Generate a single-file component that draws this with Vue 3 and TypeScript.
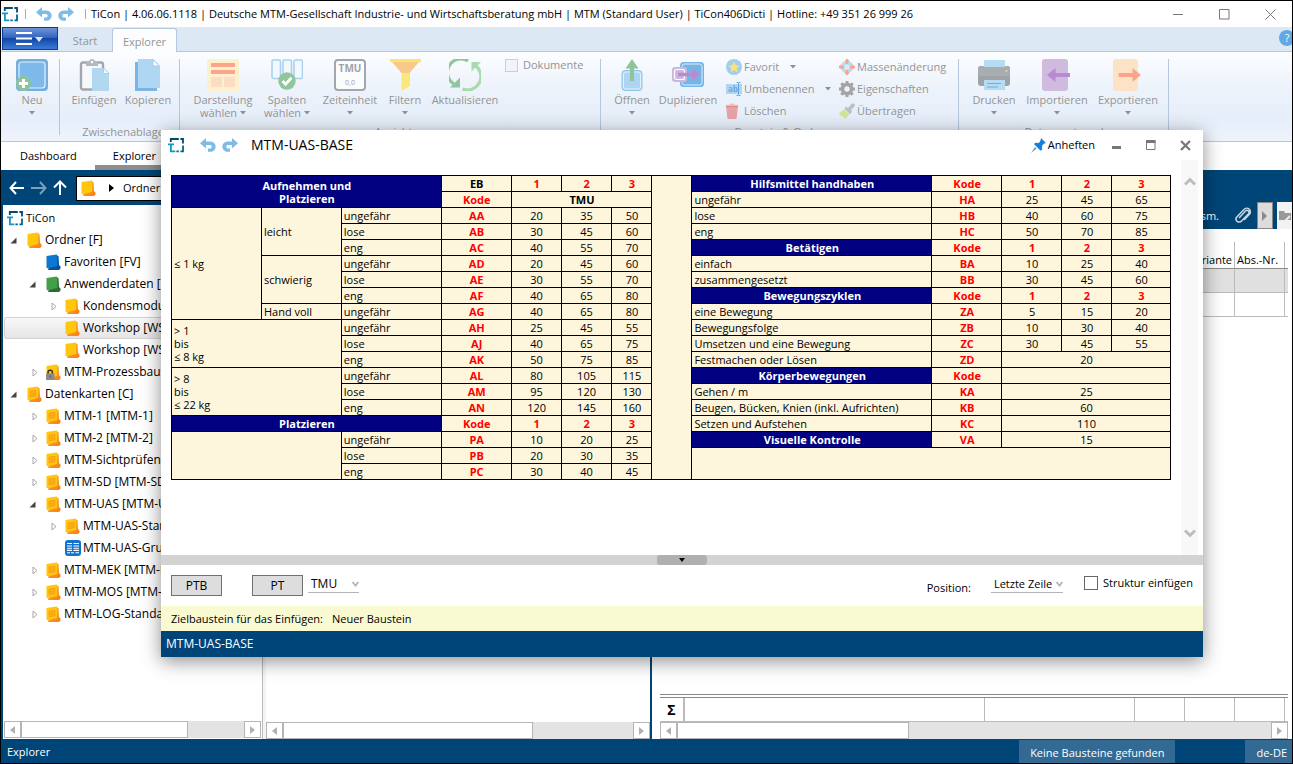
<script setup lang="ts">
import { ref } from 'vue'

interface Cell {
  t?: string
  k: string
  cs?: number
  rs?: number
}

interface TreeNode {
  label: string
  level: number
  icon: string
  state?: 'open' | 'closed'
  selected?: boolean
}

const unit = ref('TMU')
const target = ref('Letzte Zeile')
const insertStructure = ref(false)
const showDocuments = ref(false)

const codeRow = (code: string, values: string[]): Cell[] => [
  { t: code, k: 'code' },
  ...values.map((v): Cell => ({ t: v, k: 'num' })),
]
const headRow = (): Cell[] => ['Kode', '1', '2', '3'].map((t): Cell => ({ t, k: 'code' }))
const leftRow = (name: string, code: string, values: string[]): Cell[] => [
  { t: name, k: 'txt' },
  ...codeRow(code, values),
]

const left: Cell[][] = [
  [
    { t: 'Aufnehmen und\nPlatzieren', k: 'navy', cs: 3, rs: 2 },
    { t: 'EB', k: 'bold' },
    { t: '1', k: 'code' },
    { t: '2', k: 'code' },
    { t: '3', k: 'code' },
  ],
  [{ t: 'Kode', k: 'code' }, { t: 'TMU', k: 'bold', cs: 3 }],
  [{ t: '≤ 1 kg', k: 'txt', rs: 7 }, { t: 'leicht', k: 'txt', rs: 3 }, ...leftRow('ungefähr', 'AA', ['20', '35', '50'])],
  leftRow('lose', 'AB', ['30', '45', '60']),
  leftRow('eng', 'AC', ['40', '55', '70']),
  [{ t: 'schwierig', k: 'txt', rs: 3 }, ...leftRow('ungefähr', 'AD', ['20', '45', '60'])],
  leftRow('lose', 'AE', ['30', '55', '70']),
  leftRow('eng', 'AF', ['40', '65', '80']),
  [{ t: 'Hand voll', k: 'txt' }, ...leftRow('ungefähr', 'AG', ['40', '65', '80'])],
  [{ t: '> 1\nbis\n≤ 8 kg', k: 'txt', cs: 2, rs: 3 }, ...leftRow('ungefähr', 'AH', ['25', '45', '55'])],
  leftRow('lose', 'AJ', ['40', '65', '75']),
  leftRow('eng', 'AK', ['50', '75', '85']),
  [{ t: '> 8\nbis\n≤ 22 kg', k: 'txt', cs: 2, rs: 3 }, ...leftRow('ungefähr', 'AL', ['80', '105', '115'])],
  leftRow('lose', 'AM', ['95', '120', '130']),
  leftRow('eng', 'AN', ['120', '145', '160']),
  [{ t: 'Platzieren', k: 'navy', cs: 3 }, ...headRow()],
  [{ k: 'txt', cs: 2, rs: 3 }, ...leftRow('ungefähr', 'PA', ['10', '20', '25'])],
  leftRow('lose', 'PB', ['20', '30', '35']),
  leftRow('eng', 'PC', ['30', '40', '45']),
]

const wide = (name: string, code: string, value: string, kind = 'txt'): Cell[] => [
  { t: name, k: kind },
  { t: code, k: 'code' },
  { t: value, k: 'num', cs: 3 },
]

const right: Cell[][] = [
  [{ t: 'Hilfsmittel handhaben', k: 'navy' }, ...headRow()],
  leftRow('ungefähr', 'HA', ['25', '45', '65']),
  leftRow('lose', 'HB', ['40', '60', '75']),
  leftRow('eng', 'HC', ['50', '70', '85']),
  [{ t: 'Betätigen', k: 'navy' }, ...headRow()],
  leftRow('einfach', 'BA', ['10', '25', '40']),
  leftRow('zusammengesetzt', 'BB', ['30', '45', '60']),
  [{ t: 'Bewegungszyklen', k: 'navy' }, ...headRow()],
  leftRow('eine Bewegung', 'ZA', ['5', '15', '20']),
  leftRow('Bewegungsfolge', 'ZB', ['10', '30', '40']),
  leftRow('Umsetzen und eine Bewegung', 'ZC', ['30', '45', '55']),
  wide('Festmachen oder Lösen', 'ZD', '20'),
  wide('Körperbewegungen', 'Kode', '', 'navy'),
  wide('Gehen / m', 'KA', '25'),
  wide('Beugen, Bücken, Knien (inkl. Aufrichten)', 'KB', '60'),
  wide('Setzen und Aufstehen', 'KC', '110'),
  wide('Visuelle Kontrolle', 'VA', '15', 'navy'),
  [{ k: 'txt', cs: 5, rs: 2 }],
  [],
]

const rows: Cell[][] = left.map((cells, i) => [
  ...cells,
  ...(i === 0 ? [{ k: 'txt', rs: 19 } as Cell] : []),
  ...right[i],
])

const columns = [90, 80, 100, 70, 50, 50, 41, 40, 240, 70, 60, 50, 59]

const tree: TreeNode[] = [
  { label: 'Ordner [F]', level: 0, icon: 'folder', state: 'open' },
  { label: 'Favoriten [FV]', level: 1, icon: 'folder-blue' },
  { label: 'Anwenderdaten [U]', level: 1, icon: 'folder-green', state: 'open' },
  { label: 'Kondensmodule', level: 2, icon: 'folder', state: 'closed' },
  { label: 'Workshop [WS1]', level: 2, icon: 'folder', selected: true },
  { label: 'Workshop [WS2]', level: 2, icon: 'folder' },
  { label: 'MTM-Prozessbausteine', level: 1, icon: 'folder-lock', state: 'closed' },
  { label: 'Datenkarten [C]', level: 0, icon: 'card', state: 'open' },
  { label: 'MTM-1 [MTM-1]', level: 1, icon: 'card', state: 'closed' },
  { label: 'MTM-2 [MTM-2]', level: 1, icon: 'card', state: 'closed' },
  { label: 'MTM-Sichtprüfen', level: 1, icon: 'card', state: 'closed' },
  { label: 'MTM-SD [MTM-SD]', level: 1, icon: 'card', state: 'closed' },
  { label: 'MTM-UAS [MTM-UAS]', level: 1, icon: 'card', state: 'open' },
  { label: 'MTM-UAS-Standard', level: 2, icon: 'card', state: 'closed' },
  { label: 'MTM-UAS-Grund', level: 2, icon: 'sheet' },
  { label: 'MTM-MEK [MTM-MEK]', level: 1, icon: 'card', state: 'closed' },
  { label: 'MTM-MOS [MTM-MOS]', level: 1, icon: 'card', state: 'closed' },
  { label: 'MTM-LOG-Standard', level: 1, icon: 'card', state: 'closed' },
]
</script>

<template>
  <div class="app">
    <svg class="defs" aria-hidden="true">
      <defs>
        <linearGradient id="gOrange" x1="0" y1="0" x2="1" y2="1">
          <stop offset="0" stop-color="#ffb020" /><stop offset="1" stop-color="#f57c1c" />
        </linearGradient>
      </defs>
      <symbol id="logo" viewBox="0 0 16 16">
        <path d="M2.800 5V2h8M12.400 2H15v4.600" fill="none" stroke="#004a70" stroke-width="1.800" />
        <path d="M15 8.600v5.800h-2.600M10.800 14.400H8.400" fill="none" stroke="#00668f" stroke-width="1.800" />
        <path d="M0 7.400h6M2.900 7.400v7h4.400" fill="none" stroke="#1596c4" stroke-width="1.800" />
      </symbol>
      <symbol id="undo" viewBox="0 0 16 14">
        <path d="M0 5.300 6 0v3.400h4.500a5.200 5.200 0 0 1 0 10.400H8v-3.400h2.300a1.800 1.800 0 0 0 0-3.500H6v3.700z" fill="#7ebbe6" />
      </symbol>
      <symbol id="redo" viewBox="0 0 16 14">
        <path d="M16 5.300 10 0v3.400H5.500a5.200 5.200 0 0 0 0 10.400H8v-3.400H5.700a1.800 1.800 0 0 1 0-3.500H10v3.700z" fill="#7ebbe6" />
      </symbol>
      <symbol id="folder" viewBox="0 0 16 16">
        <path d="M10 1.500l2.500.5.5 9 1.500 1.500v2L13 16H2l1-3z" fill="url(#gOrange)" />
        <path d="M.5 2 10.500.5q.8 0 .8.8V12L2 14.200q-1.500.2-1.500-.8z" fill="#ffc60b" />
      </symbol>
      <symbol id="folder-blue" viewBox="0 0 16 16">
        <path d="M10 1.500l2.500.5.5 9 1.500 1.500v2L13 16H2l1-3z" fill="#00509c" />
        <path d="M.5 2 10.500.5q.8 0 .8.8V12L2 14.200q-1.500.2-1.500-.8z" fill="#0b78d4" />
      </symbol>
      <symbol id="folder-green" viewBox="0 0 16 16">
        <path d="M10 1.500l2.500.5.5 9 1.500 1.500v2L13 16H2l1-3z" fill="#2c6b35" />
        <path d="M.5 2 10.500.5q.8 0 .8.8V12L2 14.200q-1.500.2-1.500-.8z" fill="#44a048" />
      </symbol>
      <symbol id="folder-lock" viewBox="0 0 16 16">
        <path d="M10 1.500l2.500.5.5 9 1.500 1.500v2L13 16H2l1-3z" fill="url(#gOrange)" />
        <path d="M.5 2 10.500.5q.8 0 .8.8V12L2 14.200q-1.500.2-1.500-.8z" fill="#ffc60b" />
        <path d="M2 10V8.500a2.200 2.200 0 0 1 4.400 0V10" fill="none" stroke="#333" stroke-width="1.500" />
        <rect x="0" y="9.500" width="8.500" height="6.500" rx=".8" fill="#8a8a8a" />
        <path d="M4.200 11.500v2" stroke="#555" />
      </symbol>
      <symbol id="card" viewBox="0 0 16 16">
        <path d="M10 1.500l2.500.5.5 9 1.500 1.500v2L13 16H2l1-3z" fill="url(#gOrange)" />
        <path d="M.5 2 10.500.5q.8 0 .8.8V12L2 14.200q-1.500.2-1.500-.8z" fill="#ffc60b" />
        <path d="M3.200 5.200 8.800 4.500v5.200l-5.600 1z" fill="#ffb31a" stroke="#f79c1a" stroke-width="1" />
        <path d="M4.800 7h2.500v1.600H4.800z" fill="none" stroke="#f79c1a" stroke-width=".6" />
      </symbol>
      <symbol id="sheet" viewBox="0 0 16 16">
        <rect width="16" height="16" rx="3" fill="#1373cc" />
        <path d="M2 3.500h5M8.500 3.500H14M2 6h5M8.500 6H14M2 8.200h5M8.500 8.200H14M2 10.400h5M8.500 10.400H14M2 12.800h3M6 12.800h3M10.500 12.800H14" stroke="#fff" stroke-width="1.100" />
      </symbol>
      <symbol id="tri" viewBox="0 0 6 4"><path d="M0 0h6L3 3.500z" fill="#8f8f8f" /></symbol>
      <symbol id="prev" viewBox="0 0 6 8"><path d="M5 0v8L0 4z" fill="#b0b0b0" /></symbol>
      <symbol id="next" viewBox="0 0 6 8"><path d="M0 0v8l5-4z" fill="#b0b0b0" /></symbol>
    </svg>

    <header class="titlebar">
      <svg class="i16"><use href="#logo" /></svg>
      <span class="bar"></span>
      <button class="ghost" aria-label="Rückgängig"><svg class="arrow"><use href="#undo" /></svg></button>
      <button class="ghost" aria-label="Wiederholen"><svg class="arrow"><use href="#redo" /></svg></button>
      <span class="bar late"></span>
      <h1>TiCon | 4.06.06.1118 | Deutsche MTM-Gesellschaft Industrie- und Wirtschaftsberatung mbH | MTM (Standard User) | TiCon406Dicti | Hotline: +49 351 26 999 26</h1>
      <div class="wincontrols">
        <button class="ghost" aria-label="Minimieren"><svg width="11" height="11" viewBox="0 0 11 11"><path d="M0 5.500h10" stroke="#777" /></svg></button>
        <button class="ghost" aria-label="Maximieren"><svg width="11" height="11" viewBox="0 0 11 11"><path d="M.5.500h9.500v9.500H.5z" fill="none" stroke="#777" /></svg></button>
        <button class="ghost" aria-label="Schließen"><svg width="11" height="11" viewBox="0 0 11 11"><path d="m.5.500 10 10M10.500.500l-10 10" stroke="#777" /></svg></button>
      </div>
    </header>

    <nav class="tabs">
      <button class="appmenu" aria-label="Menü">
        <svg width="28" height="13" viewBox="0 0 28 13"><path d="M0 1h16M0 6.500h16M0 12h16" stroke="#fff" stroke-width="2" /><path d="M19 5h8l-4 5z" fill="#dce8fa" /></svg>
      </button>
      <button class="tab">Start</button>
      <button class="tab active">Explorer</button>
      <button class="help" aria-label="Hilfe">?</button>
    </nav>

    <section class="ribbon">
      <div class="group g1">
        <button class="big w56">
          <svg width="32" height="32" viewBox="0 0 32 32"><rect width="32" height="32" rx="4" fill="#74aede" /><rect x="3" y="3" width="26" height="26" rx="3" fill="#7db9ea" stroke="#e4f0fa" stroke-width="1.200" /><circle cx="7.500" cy="24.500" r="7.500" fill="#8fc49a" /><path d="M7.500 20v9M3 24.500h9" stroke="#fff" stroke-width="3" /></svg>
          <span>Neu</span><svg class="tri"><use href="#tri" /></svg>
        </button>
      </div>
      <div class="group g2">
        <div class="items">
          <button class="big w54">
            <svg width="32" height="32" viewBox="0 0 32 32"><rect x="3" y="3.500" width="22" height="27" rx="2" fill="#f5f8fc" stroke="#a3a6aa" stroke-width="2.400" /><path d="M8 7V3h3a3 3 0 0 1 6 0h3v4z" fill="#b4b7bb" /><circle cx="14" cy="3" r="1.300" fill="#fff" /><path d="M14 9h12l5 5v18H14z" fill="#b2d8f1" /><path d="M25.500 9v5.500H31z" fill="#fff" stroke="#a8d0ec" /></svg>
            <span>Einfügen</span>
          </button>
          <button class="big w54">
            <svg width="32" height="32" viewBox="0 0 32 32"><path d="M3 3h22v29H3z" fill="#7ab5e4" /><path d="M6 0h15l7 7v22H6z" fill="#b0d7f2" /><path d="M21 .5V7h6.500z" fill="#fff" stroke="#9fcbea" /></svg>
            <span>Kopieren</span>
          </button>
        </div>
        <div class="caption">Zwischenablage</div>
      </div>
      <div class="group g3">
        <div class="items">
          <button class="big w72">
            <svg width="32" height="32" viewBox="0 0 32 32"><path d="M0 0h32v32H0z" fill="#fcf0cd" /><path d="M4 4h24v4H4zM4 11h24v4H4z" fill="#fba58d" /><path d="M4 18h11v10H4zM17 18h11v10H17z" fill="#fbdcc4" /></svg>
            <span>Darstellung<br>wählen <svg class="tri in"><use href="#tri" /></svg></span>
          </button>
          <button class="big w56">
            <svg width="32" height="32" viewBox="0 0 32 32"><g fill="#f2f8fd" stroke="#a9d2ee" stroke-width="1.600"><rect x="1" y="1" width="8.500" height="18.500" rx="1.500" /><rect x="12" y="1" width="8.500" height="18.500" rx="1.500" /><rect x="23" y="1" width="8.500" height="18.500" rx="1.500" /></g><circle cx="16" cy="22" r="8.700" fill="#90c69b" /><path d="m11.500 22 3 3.200 6-6.500" fill="none" stroke="#fff" stroke-width="2.800" /></svg>
            <span>Spalten<br>wählen <svg class="tri in"><use href="#tri" /></svg></span>
          </button>
          <button class="big w70">
            <svg width="32" height="32" viewBox="0 0 32 32"><rect x="1" y="1" width="30" height="30" rx="3" fill="#fbfcfe" stroke="#a3a6aa" stroke-width="2" /><text x="16" y="13" text-anchor="middle" class="unitbig">TMU</text><text x="16" y="26" text-anchor="middle" class="unitsmall">0,0</text></svg>
            <span>Zeiteinheit</span><svg class="tri"><use href="#tri" /></svg>
          </button>
          <button class="big w40">
            <svg width="32" height="32" viewBox="0 0 32 32"><path d="M1 0h31v3H1z" fill="#fbe36d" /><path d="M3 3h27L20.500 14h-8z" fill="#f9c98a" /><path d="M12.500 14h8.500v13l-8.500 5z" fill="#fbe87c" /></svg>
            <span>Filtern</span><svg class="tri"><use href="#tri" /></svg>
          </button>
          <button class="big w80">
            <svg width="32" height="32" viewBox="0 0 32 32"><path d="M19 1.800A13.500 13.500 0 0 0 5 25" fill="none" stroke="#90c69b" stroke-width="3.200" /><path d="M1 28.500h10V18.500z" fill="#90c69b" /><path d="M13.500 30A13.500 13.500 0 0 0 27 7" fill="none" stroke="#a9d9ae" stroke-width="3.200" /><path d="M32 3H22.500v9.500z" fill="#a9d9ae" /></svg>
            <span>Aktualisieren</span>
          </button>
          <label class="docs"><input v-model="showDocuments" type="checkbox" disabled>Dokumente</label>
        </div>
        <div class="caption">Ansicht</div>
      </div>
      <div class="group g4">
        <div class="items">
          <button class="big w50">
            <svg width="32" height="32" viewBox="0 0 32 32"><rect x="6" y="11.500" width="20" height="20" rx="3" fill="#add5f2" stroke="#8fc5ea" /><rect x="7.500" y="13" width="17" height="17" rx="2" fill="none" stroke="#e3f1fb" /><path d="M16 0 22.500 9.500H18V22h-4V9.500H9.500z" fill="#8fc49a" /></svg>
            <span>Öffnen</span><svg class="tri"><use href="#tri" /></svg>
          </button>
          <button class="big w62">
            <svg width="32" height="32" viewBox="0 0 32 32"><rect x="8" y="3" width="24" height="25" rx="3.500" fill="#76b4e6" /><rect x="10" y="5" width="20" height="21" rx="2.500" fill="none" stroke="#deeefa" /><rect x="0" y="8" width="15" height="15" rx="3" fill="#cdb8dc" /><rect x="2.500" y="10.500" width="10" height="10" rx="2" fill="none" stroke="#fff" stroke-width="1.200" /><path d="M6 13.700h14V9.500l8 6-8 6v-4.300H6z" fill="#b78ad2" /></svg>
            <span>Duplizieren</span>
          </button>
          <div class="small list1">
            <button>
              <svg class="i16" viewBox="0 0 16 16"><circle cx="8" cy="8" r="8" fill="#a3cdee" /><path d="m8 2.600 1.700 3.600 3.900.4-2.900 2.700.8 3.900L8 11.200l-3.500 2 .8-3.900-2.900-2.700 3.900-.4z" fill="#fbe37c" /></svg>
              <span>Favorit</span><svg class="tri gap"><use href="#tri" /></svg>
            </button>
            <button>
              <svg class="i16" viewBox="0 0 16 16"><path d="M0 3h16v10H0z" fill="#aed6f3" /><text x="2" y="11" class="abtext">ab</text><path d="M12.500 2v12M10.500 1.500h1.500l.5.500.5-.5h1.500M10.500 14.500h1.500l.5-.5.5.5h1.500" fill="none" stroke="#5fa4de" /></svg>
              <span>Umbenennen</span><svg class="tri gap"><use href="#tri" /></svg>
            </button>
            <button>
              <svg class="i16" viewBox="0 0 16 16"><path d="M0 3.500h12L10.500 16h-9z" fill="#e5a3a8" /><path d="M0 1.800h3.500L4.500.5h3l1 1.300H12v2H0z" fill="#f6bf9c" /><path d="M0 3h12v1.200H0z" fill="#e08b90" /></svg>
              <span>Löschen</span>
            </button>
          </div>
          <div class="small">
            <button>
              <svg class="i16" viewBox="0 0 16 16"><circle cx="8" cy="8" r="6.200" fill="#b9dcf2" /><path d="M8 0v5M8 11v5M0 8h5M11 8h5" stroke="#f9a48e" stroke-width="2.400" /><path d="M5.800 2.200h4.400M5.800 13.800h4.400M2.200 5.800v4.400M13.800 5.800v4.400" stroke="#f9a48e" stroke-width="1.400" /><circle cx="8" cy="8" r="2.600" fill="#d8ebf7" /></svg>
              <span>Massenänderung</span>
            </button>
            <button>
              <svg class="i16" viewBox="0 0 16 16"><circle cx="8" cy="8" r="4.500" fill="none" stroke="#a2a4a8" stroke-width="3.600" /><path d="M8 0v3M8 13v3M0 8h3M13 8h3M2.300 2.300l2.200 2.200M11.500 11.500l2.200 2.200M2.300 13.700l2.200-2.200M11.500 4.500l2.200-2.200" stroke="#a2a4a8" stroke-width="3" /></svg>
              <span>Eigenschaften</span>
            </button>
            <button>
              <svg class="i16" viewBox="0 0 16 16"><path d="m9 5 3.500-4 2-.8 1.500 1.500-.8 2L12 7l1 2-2 2.300L5.500 5.500l1.700-2z" fill="#bcbfc3" /><path d="M5 6l5.500 5.500L6 16 4.800 14 3 14.500l.2-2-2.200.3L0 10.500z" fill="#d2e49a" /></svg>
              <span>Übertragen</span>
            </button>
          </div>
        </div>
        <div class="caption">Baustein &amp; Ordner</div>
      </div>
      <div class="group g5">
        <div class="items">
          <button class="big w60">
            <svg width="32" height="32" viewBox="0 0 32 32"><rect x="0" y="7" width="32" height="20" rx="3" fill="#9fa2a6" /><rect x="0" y="7" width="32" height="10" rx="3" fill="#a9acb0" /><path d="M6 1h21v7H6z" fill="#b5dcf2" /><circle cx="28.500" cy="12" r="1" fill="#d7e58a" /><path d="M6 21h21v10H6z" fill="#b5dcf2" /><path d="M9 24.500h14M9 28h11" stroke="#6db0e4" stroke-width="1.200" /></svg>
            <span>Drucken</span><svg class="tri"><use href="#tri" /></svg>
          </button>
          <button class="big w66">
            <svg width="32" height="32" viewBox="0 0 32 32"><rect x="1" y="0" width="26" height="32" rx="3" fill="#d0bbde" /><path d="M6 16l8.500-7v5H29v4H14.500v5z" fill="#b78ad2" /></svg>
            <span>Importieren</span><svg class="tri"><use href="#tri" /></svg>
          </button>
          <button class="big w76">
            <svg width="32" height="32" viewBox="0 0 32 32"><rect x="1" y="0" width="25" height="32" rx="3" fill="#fce3c6" /><path d="M29 16l-8.500-7v5H6.500v4h14v5z" fill="#fba58d" /></svg>
            <span>Exportieren</span><svg class="tri"><use href="#tri" /></svg>
          </button>
        </div>
        <div class="caption">Datenaustausch</div>
      </div>
    </section>

    <nav class="views">
      <a href="#dashboard">Dashboard</a>
      <a href="#explorer" class="current">Explorer</a>
    </nav>

    <main class="work">
      <div class="address">
        <button class="ghost" aria-label="Zurück"><svg width="16" height="14" viewBox="0 0 16 14"><path d="M15 7H1.500M7 1 1.500 7 7 13" fill="none" stroke="#fff" stroke-width="2" /></svg></button>
        <button class="ghost" aria-label="Vor"><svg width="16" height="14" viewBox="0 0 16 14"><path d="M0 7h14M9 1l5.500 6L9 13" fill="none" stroke="#7ba1ba" stroke-width="2" /></svg></button>
        <button class="ghost" aria-label="Aufwärts"><svg width="14" height="16" viewBox="0 0 14 16"><path d="M7 15V1.500M1 7.500l6-6 6 6" fill="none" stroke="#fff" stroke-width="2" /></svg></button>
        <div class="path"><svg class="i16"><use href="#folder" /></svg><svg width="5" height="8" viewBox="0 0 5 8"><path d="M0 0v8l5-4z" /></svg><span>Ordner</span></div>
      </div>

      <div class="panels">
        <aside class="treepane">
          <ul class="tree">
            <li class="root"><svg class="i16"><use href="#logo" /></svg><span>TiCon</span></li>
            <li v-for="node in tree" :key="node.label" :class="['lv' + node.level, { selected: node.selected }]">
              <span class="twist">
                <svg v-if="node.state === 'open'" width="7" height="7" viewBox="0 0 7 7"><path d="M6.500.500v6H.5z" fill="#444" /></svg>
                <svg v-if="node.state === 'closed'" class="closed" width="6" height="9" viewBox="0 0 6 9"><path d="M1 1v7l4-3.500z" fill="#fff" stroke="#a8a8a8" /></svg>
              </span>
              <svg class="i16"><use :href="'#' + node.icon" /></svg>
              <span class="name">{{ node.label }}</span>
            </li>
          </ul>
          <div class="hscroll">
            <button aria-label="Nach links"><svg><use href="#prev" /></svg></button>
            <div class="thumb t1"></div>
            <button class="end" aria-label="Nach rechts"><svg><use href="#next" /></svg></button>
          </div>
        </aside>
        <section class="midpane">
          <div class="hscroll">
            <button aria-label="Nach links"><svg><use href="#prev" /></svg></button>
            <div class="thumb t2"></div>
            <button class="end" aria-label="Nach rechts"><svg><use href="#next" /></svg></button>
          </div>
        </section>
        <section class="rightpane">
          <div class="tools">
            <span>sm.</span>
            <svg width="17" height="17" viewBox="0 0 17 17"><path d="m4 11 6.500-7a2 2 0 0 1 3 2.700L6.500 14a3 3 0 0 1-4.700-4L9 2.500a3.500 3.500 0 0 1 5.500 4.800L9 13" fill="none" stroke="#c9d5df" stroke-width="1.500" /></svg>
            <button class="more" aria-label="Mehr"><svg width="6" height="10" viewBox="0 0 6 10"><path d="M0 0v10l5-5z" fill="#8a8a8a" /></svg></button>
            <button class="foldbtn" aria-label="Ordner"><svg width="12" height="12" viewBox="0 0 12 12"><path d="M0 1h5l1 2h6v7H0z" fill="#999" /><path d="M6 11l5-5" stroke="#eee" stroke-width="2" /></svg></button>
          </div>
          <div class="grid head"><span>Variante</span><span>Abs.-Nr.</span></div>
          <div class="grid shade"><span></span><span></span></div>
          <div class="grid"><span></span><span></span></div>
          <div class="sum">
            <b>Σ</b><i class="grow"></i><i class="c150"></i><i class="c50"></i><i class="c50"></i><i class="c50"></i>
          </div>
          <div class="hscroll inset">
            <button aria-label="Nach links"><svg><use href="#prev" /></svg></button>
            <div class="thumb t3"></div>
            <button class="end" aria-label="Nach rechts"><svg><use href="#next" /></svg></button>
          </div>
        </section>
      </div>
    </main>

    <footer class="status">
      <span>Explorer</span>
      <span class="chip found">Keine Bausteine gefunden</span>
      <span class="chip lang">de-DE</span>
    </footer>

    <section class="dialog" role="dialog" aria-labelledby="dlgtitle">
      <header class="dlghead">
        <svg class="i16"><use href="#logo" /></svg>
        <button class="ghost first" aria-label="Rückgängig"><svg class="arrow"><use href="#undo" /></svg></button>
        <button class="ghost" aria-label="Wiederholen"><svg class="arrow"><use href="#redo" /></svg></button>
        <h2 id="dlgtitle">MTM-UAS-BASE</h2>
        <button class="ghost pin">
          <svg width="15" height="15" viewBox="0 0 15 15"><path d="m0 15 4-6 1.600 1.600z" fill="#8e8e8e" /><path d="m10 0 5 5-1.800.6-2.200 2.200.2 3.700-1.700 1.300L3 6l1.500-1.300 3.400.3L9.500 2.500z" fill="#1580dc" /></svg>
          Anheften
        </button>
        <div class="dlgcontrols">
          <button class="ghost" aria-label="Minimieren"><svg width="10" height="10" viewBox="0 0 10 10"><path d="M0 7.500h9" stroke="#777" stroke-width="3" /></svg></button>
          <button class="ghost" aria-label="Maximieren"><svg width="10" height="10" viewBox="0 0 10 10"><path d="M.5.500h8.500v9H.5z" fill="none" stroke="#777" /><path d="M0 1.500h9.500" stroke="#777" stroke-width="3" /></svg></button>
          <button class="ghost" aria-label="Schließen"><svg width="11" height="11" viewBox="0 0 11 11"><path d="m1 1 9 9M10 1l-9 9" stroke="#777" stroke-width="2.200" /></svg></button>
        </div>
      </header>

      <div class="dlgbody">
        <div class="sheetwrap">
          <table>
            <colgroup><col v-for="(w, i) in columns" :key="i" :style="{ width: w / 10 + '%' }"></colgroup>
            <tbody>
              <tr v-for="(cells, r) in rows" :key="r">
                <td v-for="(c, i) in cells" :key="i" :class="c.k" :colspan="c.cs" :rowspan="c.rs">{{ c.t }}</td>
              </tr>
            </tbody>
          </table>
        </div>
        <div class="vscroll">
          <button class="ghost" aria-label="Nach oben"><svg width="12" height="9" viewBox="0 0 12 9"><path d="M1 7.500l5-5 5 5" fill="none" stroke="#bdbdbd" stroke-width="3" /></svg></button>
          <button class="ghost" aria-label="Nach unten"><svg width="12" height="9" viewBox="0 0 12 9"><path d="M1 1.500l5 5 5-5" fill="none" stroke="#bdbdbd" stroke-width="3" /></svg></button>
        </div>
      </div>

      <div class="splitter"><button aria-label="Bereich einklappen"><svg width="6" height="4" viewBox="0 0 6 4"><path d="M0 0h6L3 4z" /></svg></button></div>

      <div class="dlgfoot">
        <button class="push">PTB</button>
        <button class="push second">PT</button>
        <div class="combo unit">
          <select v-model="unit" aria-label="Einheit"><option>TMU</option></select>
          <svg width="7" height="6" viewBox="0 0 7 6"><path d="M.5 1l3 3.500 3-3.500" fill="none" stroke="#b5b5b5" stroke-width="1.800" /></svg>
        </div>
        <label class="poslabel" for="pos">Position:</label>
        <div class="combo pos">
          <select id="pos" v-model="target"><option>Letzte Zeile</option></select>
          <svg width="7" height="6" viewBox="0 0 7 6"><path d="M.5 1l3 3.500 3-3.500" fill="none" stroke="#b5b5b5" stroke-width="1.800" /></svg>
        </div>
        <label class="struct"><input v-model="insertStructure" type="checkbox">Struktur einfügen</label>
      </div>

      <div class="notice"><span>Zielbaustein für das Einfügen:</span><span>Neuer Baustein</span></div>
      <div class="dlgstatus">MTM-UAS-BASE</div>
    </section>
  </div>
</template>

<style>
body {
  margin: 0;
}
</style>

<style scoped>
.app {
  position: relative;
  display: flex;
  flex-direction: column;
  box-sizing: border-box;
  height: 100vh;
  overflow: hidden;
  border: 1px solid #000;
  background: #fff;
  color: #000;
  font: 11px/16px "Open Sans", "Noto Sans", sans-serif;
}
.app *,
.app *::before {
  box-sizing: border-box;
}
.defs {
  position: absolute;
  width: 0;
  height: 0;
}
button,
select,
input {
  margin: 0;
  padding: 0;
  font: inherit;
  color: inherit;
}
button {
  border: 0;
  background: none;
}
svg {
  display: block;
  flex: none;
}
.ghost {
  display: flex;
  align-items: center;
}
.i16 {
  width: 16px;
  height: 16px;
}
.arrow {
  width: 16px;
  height: 14px;
}
.tri {
  width: 6px;
  height: 4px;
}
h1,
h2 {
  margin: 0;
  font-weight: 400;
  white-space: nowrap;
}

/* title bar */
.titlebar {
  display: flex;
  align-items: center;
  flex: none;
  height: 26px;
  padding-left: 1px;
}
.bar {
  width: 1px;
  height: 10px;
  margin: 0 10px 0 7px;
  background: #aaa;
}
.titlebar .ghost + .ghost {
  margin-left: 6px;
}
.bar.late {
  margin: 0 5px 0 11px;
}
h1 {
  font-size: 11px;
}
.wincontrols {
  display: flex;
  gap: 35px;
  margin: 0 16px 0 auto;
}
.titlebar .wincontrols .ghost {
  margin: 0;
}

/* ribbon tabs */
.tabs {
  display: flex;
  flex: none;
  height: 25px;
  padding-left: 1px;
  background: #dde8f5;
  border-bottom: 1px solid #b5c7de;
  color: #949494;
}
.appmenu {
  display: flex;
  align-items: center;
  justify-content: center;
  width: 56px;
  height: 23px;
  border: 1px solid #0b3c9c;
  background: linear-gradient(#6f93d8, #2f62bd 48%, #0f47a8 50%, #3f7ad6);
}
.tab {
  width: 54px;
  padding-top: 4px;
}
.tab.active {
  width: 65px;
  height: 25px;
  margin-top: 1px;
  padding-top: 2px;
  border: 1px solid #b5c7de;
  border-bottom: 0;
  border-radius: 3px 3px 0 0;
  background: #fbfdff;
}
.help {
  width: 16px;
  height: 16px;
  margin: 3px -3px 0 auto;
  border-radius: 8px;
  background: #62a8e2;
  color: #fff;
}

/* ribbon */
.ribbon {
  display: flex;
  flex: none;
  height: 90px;
  padding: 0 0 0 2px;
  border-bottom: 1px solid #b5c7de;
  background: linear-gradient(#fcfdff, #edf3fb 40%, #e6eefa 75%, #eef4fd);
  color: #949494;
}
.group {
  position: relative;
  display: flex;
  flex-direction: column;
  justify-content: space-between;
  flex: none;
  height: 76px;
  margin-top: 7px;
  border-right: 1px solid #b5c7de;
}
.items {
  display: flex;
}
.caption {
  flex: none;
  height: 11px;
  text-align: center;
  line-height: 16px;
}
.g1 {
  width: 57px;
  padding-left: 1px;
}
.g2 {
  width: 120px;
  padding-left: 7px;
}
.g3 {
  width: 421px;
  padding-left: 7px;
}
.g4 {
  width: 358px;
  padding-left: 6px;
}
.g5 {
  width: 210px;
  padding-left: 5px;
}
.big {
  display: flex;
  flex-direction: column;
  align-items: center;
  flex: none;
  line-height: 13px;
  white-space: nowrap;
}
.big > span {
  margin-top: 2px;
}
.big > span + .tri {
  margin-top: 5px;
}
.tri.in {
  display: inline-block;
  vertical-align: 2px;
}
.w40 { width: 40px; }
.w50 { width: 50px; }
.w54 { width: 54px; }
.w56 { width: 56px; }
.w60 { width: 60px; }
.w62 { width: 62px; }
.w66 { width: 66px; }
.w70 { width: 70px; }
.w72 { width: 72px; }
.w76 { width: 76px; }
.w80 { width: 80px; }
.unitbig {
  font-size: 10px;
  font-weight: 700;
  fill: #a0a2a6;
}
.unitsmall {
  font-size: 7px;
  fill: #a0a2a6;
}
.abtext {
  font-size: 8px;
  font-weight: 700;
  fill: #6eaade;
}
.docs {
  display: flex;
  gap: 5px;
  align-items: center;
  height: 12px;
}
.docs input {
  appearance: none;
  width: 13px;
  height: 13px;
  border: 1px solid #c5cfe6;
  background: #f1f4fb;
}
.small {
  display: flex;
  flex-direction: column;
  margin-top: -3px;
}
.small button {
  display: flex;
  align-items: center;
  gap: 2px;
  height: 22px;
  white-space: nowrap;
}
.list1 {
  width: 113px;
  margin-left: 7px;
}
.tri.gap {
  margin-left: 9px;
}

/* view tabs */
.views {
  display: flex;
  flex: none;
  height: 28px;
  padding-left: 1px;
}
.views a {
  padding: 6px 18px 0;
  color: #000;
  text-decoration: none;
}
.views .current {
  border-bottom: 5px solid #8e8e8e;
}

/* work area */
.work {
  display: flex;
  flex-direction: column;
  flex: 1;
  min-height: 0;
  border-left: 2px solid #004578;
}
.address {
  display: flex;
  align-items: center;
  flex: none;
  height: 35px;
  padding-left: 6px;
  background: #004578;
}
.address .ghost {
  margin-right: 6px;
}
.path {
  display: flex;
  align-items: center;
  flex: 1;
  height: 25px;
  margin: 1px 600px 0 3px;
  padding-left: 4px;
  border: 1px solid #000;
  background: #fff;
}
.path span {
  margin-left: 9px;
}
.path .i16 + svg {
  margin-left: 12px;
}
.panels {
  display: flex;
  flex: 1;
  min-height: 0;
}
.treepane {
  display: flex;
  flex-direction: column;
  justify-content: space-between;
  width: 260px;
  padding: 2px 1px 1px;
  border-right: 1px solid #bbb;
}
.tree {
  margin: 0;
  padding: 0;
  list-style: none;
  font-size: 12px;
}
.tree li {
  display: flex;
  align-items: center;
  height: 22px;
  white-space: nowrap;
  border: 1px solid transparent;
}
.tree .root {
  gap: 3px;
  padding-left: 2px;
  font-size: 11px;
}
.twist {
  display: flex;
  width: 19px;
  padding-left: 2px;
}
.closed {
  margin-left: 3px;
}
.name {
  margin-left: 2px;
}
.lv0 { padding-left: 3px; }
.lv1 { padding-left: 22px; }
.lv2 { padding-left: 41px; }
.tree .selected {
  border-color: #d2d2d2;
  border-radius: 2px;
  background: linear-gradient(#f8f8f8, #e5e5e5);
}
.midpane {
  display: flex;
  flex-direction: column;
  justify-content: flex-end;
  flex: none;
  width: 387px;
  border-left: 3px solid #f4f4f4;
}
.rightpane {
  display: flex;
  flex-direction: column;
  flex: 1;
  min-width: 0;
  border-left: 2px solid #004578;
}
.hscroll {
  display: flex;
  flex: none;
  height: 17px;
  background: #e3e3e3;
}
.hscroll button {
  display: flex;
  align-items: center;
  justify-content: center;
  width: 17px;
  border: 1px solid #b5b5b5;
  background: #fff;
}
.hscroll button svg {
  width: 6px;
  height: 8px;
}
.hscroll .end {
  margin-left: auto;
}
.thumb {
  border: 1px solid #b5b5b5;
  background: #fff;
}
.t1,
.t2 { width: 65%; }
.t3 { width: 37%; }
.inset {
  margin: 0 4px 0 8px;
}
.tools {
  display: flex;
  align-items: center;
  justify-content: flex-end;
  flex: none;
  height: 27px;
  margin-top: -3px;
  background: #004578;
  color: #fff;
}
.tools > svg {
  margin: 0 5px 0 16px;
}
.tools button {
  display: flex;
  align-items: center;
  justify-content: center;
  height: 27px;
}
.more {
  width: 16px;
  border: 1px solid #888;
  background: #dcdcdc;
}
.foldbtn {
  width: 15px;
  margin-left: 4px;
  background: #f2f2f2;
}
.grid {
  display: flex;
  justify-content: flex-end;
  flex: none;
  height: 24px;
  margin: 0 4px 0 8px;
  padding-right: 3px;
  border-bottom: 1px solid #bbb;
}
.grid span {
  width: 50px;
  padding: 4px 0 0 2px;
  border-right: 1px solid #bbb;
}
.grid span:first-child {
  display: flex;
  justify-content: flex-end;
  padding-right: 2px;
}
.grid.head {
  height: 27px;
  margin-top: 13px;
  border-color: #8a8a8a;
}
.grid.head span {
  padding-top: 10px;
}
.grid.shade {
  background: #e0e0e0;
}
.sum {
  display: flex;
  flex: none;
  height: 28px;
  margin: auto 4px 0 8px;
  padding-right: 3px;
  border-top: 4px double #8a8a8a;
  border-bottom: 1px solid #bbb;
}
.sum b {
  width: 25px;
  padding-top: 4px;
  border-right: 2px solid #bbb;
  text-align: center;
  font-size: 14px;
}
.sum i {
  border-right: 1px solid #bbb;
}
.grow { flex: 1; }
.c150 { width: 150px; }
.c50 { width: 50px; }

/* status bar */
.status {
  display: flex;
  align-items: center;
  flex: none;
  height: 24px;
  padding: 1px 0 0 6px;
  background: #004578;
  color: #fff;
}
.chip {
  display: flex;
  align-items: center;
  height: 23px;
  padding: 2px 11px 0;
  background: #336a93;
}
.found {
  margin: 0 70px 0 auto;
}
.lang {
  padding-right: 5px;
}

/* floating window */
.dialog {
  position: absolute;
  top: 129px;
  left: 160px;
  right: 89px;
  background: #fff;
  box-shadow: 0 4px 18px rgba(0, 0, 0, 0.45);
}
.dlghead {
  display: flex;
  align-items: center;
  height: 30px;
  padding: 0 12px 0 7px;
}
.dlghead .first {
  margin: 0 6px 0 16px;
}
h2 {
  margin-left: 13px;
  font-size: 14px;
}
.pin {
  gap: 2px;
  margin-left: auto;
}
.dlgcontrols {
  display: flex;
  gap: 24px;
  margin-left: 17px;
}
.dlgbody {
  display: flex;
}
.sheetwrap {
  flex: 1;
  padding: 15px 10px 75px 10px;
}
table {
  width: 100%;
  table-layout: fixed;
  border-collapse: collapse;
  background: #fdf6dc;
}
tr {
  height: 16px;
}
td {
  height: 16px;
  padding: 0 1px 0 2px;
  border: 1px solid #000;
  line-height: 13px;
  white-space: pre-line;
}
.navy {
  background: #000080;
  color: #fff;
  font-weight: 700;
  text-align: center;
}
.code,
.bold,
.num {
  text-align: center;
}
.code {
  color: #f00;
  font-weight: 700;
}
.bold {
  font-weight: 700;
}
.vscroll {
  display: flex;
  flex-direction: column;
  align-items: center;
  justify-content: space-between;
  width: 17px;
  margin-right: 5px;
  padding: 17px 0;
  background: #f8f8f8;
}
.splitter {
  display: flex;
  justify-content: center;
  height: 10px;
  background: #d3d3d3;
}
.splitter button {
  display: flex;
  align-items: center;
  justify-content: center;
  width: 50px;
  border-radius: 3px;
  background: #b0b0b0;
}
.dlgfoot {
  display: flex;
  align-items: flex-start;
  height: 41px;
  padding: 10px 10px 0;
}
.push {
  width: 51px;
  height: 21px;
  border: 1px solid #707070;
  background: #ddd;
}
.second {
  margin: 0 5px 0 30px;
}
.combo {
  display: flex;
  align-items: center;
  height: 18px;
  border-bottom: 1px solid #b5b5b5;
}
.combo select {
  flex: 1;
  appearance: none;
  min-width: 0;
  border: 0;
  background: none;
  padding-left: 3px;
}
.unit {
  width: 51px;
}
.pos {
  width: 72px;
  margin: 0 21px 0 20px;
}
.poslabel {
  margin: 5px 0 0 auto;
}
.struct {
  display: flex;
  align-items: center;
  gap: 5px;
}
.struct input {
  appearance: none;
  width: 14px;
  height: 14px;
  border: 1px solid #666;
  background: #fff;
}
.notice {
  display: flex;
  align-items: center;
  gap: 9px;
  height: 25px;
  padding-left: 10px;
  background: #fafad2;
}
.push,
.unit,
.dlgstatus {
  font-size: 12px;
}
.dlgstatus {
  height: 26px;
  padding: 5px 5px 0;
  background: #004578;
  color: #fff;
}
</style>
